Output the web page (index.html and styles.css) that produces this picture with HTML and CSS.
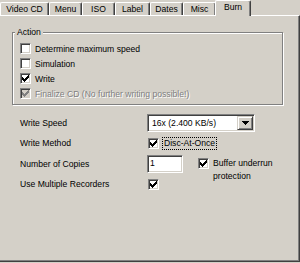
FILE: index.html
```html
<!DOCTYPE html>
<html>
<head>
<meta charset="utf-8">
<link rel="stylesheet" href="styles.css">
</head>
<body>
<div class="dialog">
  <div class="tabs">
    <div class="tab tab-video">Video CD</div>
    <div class="tab">Menu</div>
    <div class="tab">ISO</div>
    <div class="tab tab-label">Label</div>
    <div class="tab">Dates</div>
    <div class="tab">Misc</div>
    <div class="tab tab-active">Burn</div>
  </div>
  <div class="panel">
    <div class="group">
      <div class="group-title">Action</div>
      <div class="check-list">
        <div class="check-row"><span class="cb"></span>Determine maximum speed</div>
        <div class="check-row"><span class="cb"></span>Simulation</div>
        <div class="check-row"><span class="cb"><svg class="tick" width="7" height="7" viewBox="0 0 7 7"><path d="M6 0h1v1h-1z M5 1h2v1h-2z M0 2h1v1h-1z M4 2h3v1h-3z M0 3h2v1h-2z M3 3h3v1h-3z M0 4h5v1h-5z M1 5h3v1h-3z M2 6h1v1h-1z"/></svg></span>Write</div>
        <div class="check-row disabled"><span class="cb"><svg class="tick" width="7" height="7" viewBox="0 0 7 7"><path d="M6 0h1v1h-1z M5 1h2v1h-2z M0 2h1v1h-1z M4 2h3v1h-3z M0 3h2v1h-2z M3 3h3v1h-3z M0 4h5v1h-5z M1 5h3v1h-3z M2 6h1v1h-1z"/></svg></span>Finalize CD (No further writing possible!)</div>
      </div>
    </div>
    <div class="settings">
      <div class="label">Write Speed</div>
      <div class="combo">
        <span class="combo-text">16x (2.400 KB/s)</span>
        <span class="combo-btn"><svg width="7" height="4" viewBox="0 0 7 4"><path d="M0 0h7v1h-7z M1 1h5v1h-5z M2 2h3v1h-3z M3 3h1v1h-1z"/></svg></span>
      </div>
      <div class="label">Write Method</div>
      <div class="check-inline"><span class="cb"><svg class="tick" width="7" height="7" viewBox="0 0 7 7"><path d="M6 0h1v1h-1z M5 1h2v1h-2z M0 2h1v1h-1z M4 2h3v1h-3z M0 3h2v1h-2z M3 3h3v1h-3z M0 4h5v1h-5z M1 5h3v1h-3z M2 6h1v1h-1z"/></svg></span><span class="focus">Disc-At-Once</span></div>
      <div class="label">Number of Copies</div>
      <div class="copies">
        <div class="edit">1</div>
        <div class="buffer"><span class="cb"><svg class="tick" width="7" height="7" viewBox="0 0 7 7"><path d="M6 0h1v1h-1z M5 1h2v1h-2z M0 2h1v1h-1z M4 2h3v1h-3z M0 3h2v1h-2z M3 3h3v1h-3z M0 4h5v1h-5z M1 5h3v1h-3z M2 6h1v1h-1z"/></svg></span><span>Buffer underrun<br>protection</span></div>
      </div>
      <div class="label">Use Multiple Recorders</div>
      <div class="check-inline"><span class="cb"><svg class="tick" width="7" height="7" viewBox="0 0 7 7"><path d="M6 0h1v1h-1z M5 1h2v1h-2z M0 2h1v1h-1z M4 2h3v1h-3z M0 3h2v1h-2z M3 3h3v1h-3z M0 4h5v1h-5z M1 5h3v1h-3z M2 6h1v1h-1z"/></svg></span></div>
    </div>
  </div>
</div>
</body>
</html>
```
FILE: styles.css
```css
* { box-sizing: border-box; }
html, body { margin: 0; padding: 0; }
body {
  background: #d4d0c8;
  font-family: "Liberation Sans", Arial, sans-serif;
  font-size: 8.6px;
  color: #000;
  width: 300px;
  height: 263px;
  overflow: hidden;
}
.dialog {
  width: 300px;
  height: 262px;
  display: flex;
  flex-direction: column;
}
.tabs {
  display: flex;
  align-items: flex-end;
  height: 15px;
  flex: none;
}
.tab {
  width: 33px;
  height: 13px;
  line-height: 12px;
  text-align: center;
  white-space: nowrap;
  border-top: 1px solid #fff;
  border-left: 1px solid #fff;
  border-right: 1px solid #404040;
  box-shadow: inset -1px 0 0 #808080;
  border-top-left-radius: 2px;
  border-top-right-radius: 2px;
  background: #d4d0c8;
}
.tab-video { width: 49px; }
.tab-label { width: 35px; }
.tab-active {
  width: 36px;
  height: 16px;
  line-height: 13px;
  margin-left: -1px;
  margin-bottom: -1px;
  position: relative;
  z-index: 1;
}
.panel {
  flex: 1;
  border-top: 1px solid #fff;
  border-right: 1px solid #404040;
  border-bottom: 1px solid #404040;
  box-shadow: inset -1px -1px 0 #808080;
  padding: 16px 0 0 12px;
}
.group {
  width: 271px;
  border: 1px solid #808080;
  box-shadow: 1px 1px 0 #fff, inset 1px 1px 0 #fff;
  padding: 0 0 3px 7px;
}
.group-title {
  display: table;
  margin: -6px 0 0 -5px;
  padding: 0 2px;
  line-height: 11px;
  background: #d4d0c8;
}
.check-list { padding-top: 3px; }
.check-row {
  display: flex;
  align-items: center;
  height: 15px;
  white-space: nowrap;
}
.cb {
  width: 11px;
  height: 11px;
  flex: none;
  display: flex;
  align-items: center;
  justify-content: center;
  background: #fff;
  border: 1px solid;
  border-color: #808080 #fff #fff #808080;
  box-shadow: inset 1px 1px 0 #404040, inset -1px -1px 0 #d4d0c8;
  margin-right: 4px;
}
.tick { display: block; fill: #000; }
.disabled { color: #808080; text-shadow: 1px 1px 0 #fff; }
.disabled .cb { background: #d4d0c8; }
.disabled .tick { fill: #808080; }
.settings {
  display: grid;
  grid-template-columns: 127px auto;
  grid-template-rows: 21px 20px 21px 20px;
  align-items: center;
  margin: 7px 0 0 8px;
}
.label { white-space: nowrap; }
.combo {
  width: 108px;
  height: 18px;
  display: flex;
  align-items: center;
  background: #fff;
  border: 1px solid;
  border-color: #808080 #fff #fff #808080;
  box-shadow: inset 1px 1px 0 #404040, inset -1px -1px 0 #d4d0c8;
  padding: 1px;
}
.combo-text { flex: 1; padding-left: 3px; white-space: nowrap; }
.combo-btn {
  width: 16px;
  height: 14px;
  flex: none;
  display: flex;
  align-items: center;
  justify-content: center;
  background: #d4d0c8;
  border: 1px solid;
  border-color: #d4d0c8 #404040 #404040 #d4d0c8;
  box-shadow: inset 1px 1px 0 #fff, inset -1px -1px 0 #808080;
}
.combo-btn svg { display: block; fill: #000; }
.check-inline {
  display: flex;
  align-items: center;
  margin-left: 1px;
}
.check-inline .cb { margin-right: 3px; }
.focus {
  border: 1px dotted #000;
  padding: 0 1px;
  line-height: 11px;
  white-space: nowrap;
}
.copies {
  display: flex;
  align-items: flex-start;
  align-self: start;
  margin-top: 2px;
}
.edit {
  width: 36px;
  height: 18px;
  background: #fff;
  border: 1px solid;
  border-color: #808080 #fff #fff #808080;
  box-shadow: inset 1px 1px 0 #404040, inset -1px -1px 0 #d4d0c8;
  padding: 0 0 0 2px;
  line-height: 15px;
}
.buffer {
  display: flex;
  align-items: flex-start;
  margin: 2px 0 0 15px;
  line-height: 13px;
  white-space: nowrap;
}
.buffer .cb { margin-top: 1px; }
```
